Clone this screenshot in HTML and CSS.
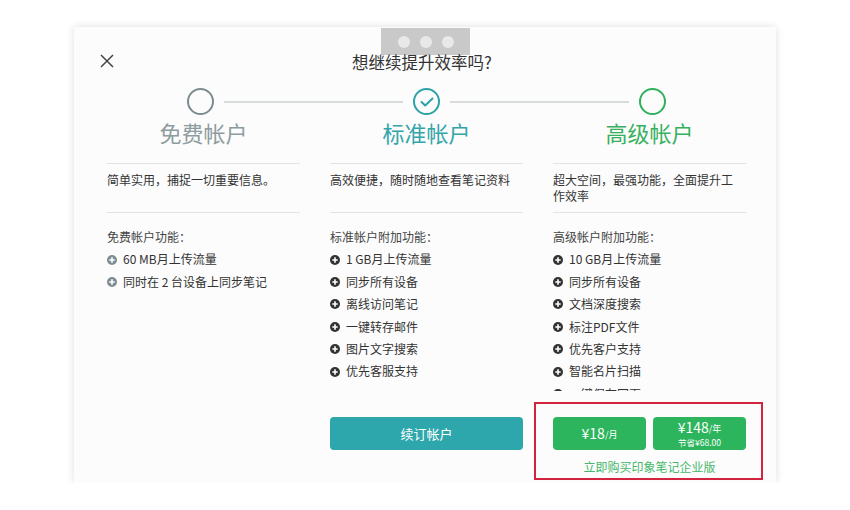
FILE: index.html
```html
<!DOCTYPE html>
<html lang="zh">
<head>
<meta charset="utf-8">
<title>想继续提升效率吗?</title>
<link rel="stylesheet" href="styles.css">
</head>
<body>
<div class="card">
  <div class="handle"><span></span><span></span><span></span></div>
  <svg class="close" width="14" height="14" viewBox="0 0 14 14"><path d="M1 1L13 13M13 1L1 13" stroke="#444" stroke-width="1.5" fill="none"/></svg>
  <div class="title">想继续提升效率吗?</div>

  <div class="steps">
    <span class="circle gray"></span>
    <span class="line"></span>
    <span class="circle teal"><svg width="14" height="10" viewBox="0 0 14 10"><path d="M1.5 5L5.2 8.5L12.5 1.5" fill="none" stroke="currentColor" stroke-width="2" stroke-linecap="round" stroke-linejoin="round"/></svg></span>
    <span class="line"></span>
    <span class="circle green"></span>
  </div>

  <div class="labels">
    <div class="label gray">免费帐户</div>
    <div class="label teal">标准帐户</div>
    <div class="label green">高级帐户</div>
  </div>

  <div class="cols">
    <div class="col gray">
      <div class="desc">简单实用，捕捉一切重要信息。</div>
      <div class="features">
        <div class="fhead">免费帐户功能：</div>
        <div class="item"><svg class="plus" viewBox="0 0 10 10"><circle cx="5" cy="5" r="5" fill="currentColor"/><path d="M5 2.3V7.7M2.3 5H7.7" stroke="#fff" stroke-width="1.6"/></svg><span>60 MB月上传流量</span></div>
        <div class="item"><svg class="plus" viewBox="0 0 10 10"><circle cx="5" cy="5" r="5" fill="currentColor"/><path d="M5 2.3V7.7M2.3 5H7.7" stroke="#fff" stroke-width="1.6"/></svg><span>同时在 2 台设备上同步笔记</span></div>
      </div>
    </div>

    <div class="col teal">
      <div class="desc">高效便捷，随时随地查看笔记资料</div>
      <div class="features">
        <div class="fhead">标准帐户附加功能：</div>
        <div class="item"><svg class="plus" viewBox="0 0 10 10"><circle cx="5" cy="5" r="5" fill="currentColor"/><path d="M5 2.3V7.7M2.3 5H7.7" stroke="#fff" stroke-width="1.6"/></svg><span>1 GB月上传流量</span></div>
        <div class="item"><svg class="plus" viewBox="0 0 10 10"><circle cx="5" cy="5" r="5" fill="currentColor"/><path d="M5 2.3V7.7M2.3 5H7.7" stroke="#fff" stroke-width="1.6"/></svg><span>同步所有设备</span></div>
        <div class="item"><svg class="plus" viewBox="0 0 10 10"><circle cx="5" cy="5" r="5" fill="currentColor"/><path d="M5 2.3V7.7M2.3 5H7.7" stroke="#fff" stroke-width="1.6"/></svg><span>离线访问笔记</span></div>
        <div class="item"><svg class="plus" viewBox="0 0 10 10"><circle cx="5" cy="5" r="5" fill="currentColor"/><path d="M5 2.3V7.7M2.3 5H7.7" stroke="#fff" stroke-width="1.6"/></svg><span>一键转存邮件</span></div>
        <div class="item"><svg class="plus" viewBox="0 0 10 10"><circle cx="5" cy="5" r="5" fill="currentColor"/><path d="M5 2.3V7.7M2.3 5H7.7" stroke="#fff" stroke-width="1.6"/></svg><span>图片文字搜索</span></div>
        <div class="item"><svg class="plus" viewBox="0 0 10 10"><circle cx="5" cy="5" r="5" fill="currentColor"/><path d="M5 2.3V7.7M2.3 5H7.7" stroke="#fff" stroke-width="1.6"/></svg><span>优先客服支持</span></div>
      </div>
      <button class="btn btn-teal">续订帐户</button>
    </div>

    <div class="col green">
      <div class="desc">超大空间，最强功能，全面提升工作效率</div>
      <div class="features">
        <div class="fhead">高级帐户附加功能：</div>
        <div class="item"><svg class="plus" viewBox="0 0 10 10"><circle cx="5" cy="5" r="5" fill="currentColor"/><path d="M5 2.3V7.7M2.3 5H7.7" stroke="#fff" stroke-width="1.6"/></svg><span>10 GB月上传流量</span></div>
        <div class="item"><svg class="plus" viewBox="0 0 10 10"><circle cx="5" cy="5" r="5" fill="currentColor"/><path d="M5 2.3V7.7M2.3 5H7.7" stroke="#fff" stroke-width="1.6"/></svg><span>同步所有设备</span></div>
        <div class="item"><svg class="plus" viewBox="0 0 10 10"><circle cx="5" cy="5" r="5" fill="currentColor"/><path d="M5 2.3V7.7M2.3 5H7.7" stroke="#fff" stroke-width="1.6"/></svg><span>文档深度搜索</span></div>
        <div class="item"><svg class="plus" viewBox="0 0 10 10"><circle cx="5" cy="5" r="5" fill="currentColor"/><path d="M5 2.3V7.7M2.3 5H7.7" stroke="#fff" stroke-width="1.6"/></svg><span>标注PDF文件</span></div>
        <div class="item"><svg class="plus" viewBox="0 0 10 10"><circle cx="5" cy="5" r="5" fill="currentColor"/><path d="M5 2.3V7.7M2.3 5H7.7" stroke="#fff" stroke-width="1.6"/></svg><span>优先客户支持</span></div>
        <div class="item"><svg class="plus" viewBox="0 0 10 10"><circle cx="5" cy="5" r="5" fill="currentColor"/><path d="M5 2.3V7.7M2.3 5H7.7" stroke="#fff" stroke-width="1.6"/></svg><span>智能名片扫描</span></div>
        <div class="item"><svg class="plus" viewBox="0 0 10 10"><circle cx="5" cy="5" r="5" fill="currentColor"/><path d="M5 2.3V7.7M2.3 5H7.7" stroke="#fff" stroke-width="1.6"/></svg><span>一键保存网页</span></div>
      </div>
      <div class="buy">
        <button class="btn btn-green"><span class="price">¥18</span><span class="unit">/月</span></button>
        <button class="btn btn-green two">
          <span class="row1"><span class="price">¥148</span><span class="unit">/年</span></span>
          <span class="save">节省¥68.00</span>
        </button>
      </div>
      <a class="biz" href="#">立即购买印象笔记企业版</a>
    </div>
  </div>

  <div class="highlight"></div>
</div>
</body>
</html>
```

FILE: styles.css
```css
html, body {
  margin: 0;
  padding: 0;
  background: #ffffff;
}

body {
  font-family: "Noto Sans CJK SC", "Noto Sans", sans-serif;
  color: #333;
}

.card {
  position: relative;
  box-sizing: border-box;
  margin: 27px 0 0 74px;
  width: 702px;
  height: 456px;
  padding: 25px 31px 0 33px;
  background: #fcfcfc;
  box-shadow: 0 0 8px rgba(0, 0, 0, 0.13);
}

.handle {
  position: absolute;
  top: 1px;
  left: 307px;
  width: 89px;
  height: 27px;
  background: #c9c9c9;
  display: flex;
  align-items: center;
  justify-content: center;
  gap: 10px;
}

.handle span {
  width: 12px;
  height: 12px;
  border-radius: 50%;
  background: #e8e8e8;
}

.close {
  position: absolute;
  left: 26px;
  top: 27px;
}

.title {
  position: relative;
  text-align: center;
  font-size: 16.5px;
  line-height: 20px;
  height: 20px;
  color: #333;
  margin-right: 8px;
}

.steps {
  display: flex;
  align-items: center;
  margin: 16px 79px 0 80px;
  height: 27px;
}

.circle {
  box-sizing: border-box;
  width: 27px;
  height: 27px;
  border-radius: 50%;
  border: 2px solid currentColor;
  display: flex;
  align-items: center;
  justify-content: center;
  flex: none;
}

.line {
  flex: 1;
  height: 2px;
  background: #d9dcdc;
  margin: 0 10px;
}

.gray { color: #7b8b8e; }
.teal { color: #2ca2a6; }
.green { color: #2fb05a; }

.labels {
  display: grid;
  grid-template-columns: 193px 193px 193px;
  column-gap: 30px;
  margin-top: 4px;
}

.label {
  text-align: center;
  font-size: 22px;
  line-height: 26px;
  height: 26px;
}

.label.gray { color: #8d9c9e; }
.label.teal { color: #33a5a9; }
.label.green { color: #37b160; }

.cols {
  display: grid;
  grid-template-columns: 193px 193px 193px;
  column-gap: 30px;
  margin-top: 18px;
}

.col {
  display: flex;
  flex-direction: column;
}

.desc {
  box-sizing: border-box;
  height: 50px;
  border-top: 1px solid #e3e3e3;
  border-bottom: 1px solid #e3e3e3;
  padding: 8px 8px 0 0;
  font-size: 12px;
  line-height: 16px;
  color: #333;
}

.features {
  height: 178px;
  overflow: hidden;
  padding-top: 13px;
  box-sizing: border-box;
}

.fhead {
  font-size: 12px;
  line-height: 22.4px;
  color: #444;
}

.item {
  display: flex;
  align-items: center;
  gap: 6px;
  font-size: 12px;
  line-height: 22.4px;
  color: #333;
}

.col.gray .plus { color: #7f8d95; }

.plus {
  width: 10px;
  height: 10px;
  flex: none;
}

.btn {
  border: none;
  margin: 0;
  padding: 0;
  font-family: inherit;
  color: #fff;
  border-radius: 4px;
  height: 33px;
  cursor: pointer;
}

.btn-teal {
  margin-top: 26px;
  width: 193px;
  background: #2ea7ac;
  font-size: 13px;
}

.buy {
  margin-top: 26px;
  display: flex;
  gap: 7px;
}

.btn-green {
  flex: 1;
  background: #2cb55c;
  display: flex;
  align-items: center;
  justify-content: center;
}

.btn-green .price {
  font-size: 14px;
  line-height: 15px;
}

.btn-green .unit {
  font-size: 9px;
  line-height: 15px;
  margin-top: 2px;
}

.btn-green.two {
  flex-direction: column;
}

.btn-green .row1 {
  display: flex;
  align-items: center;
  height: 15px;
}

.btn-green .save {
  display: block;
  font-size: 8.5px;
  line-height: 11px;
  height: 11px;
  margin-top: 2px;
}

.biz {
  margin-top: 9px;
  display: block;
  text-align: center;
  font-size: 12px;
  line-height: 16px;
  color: #44b86a;
  text-decoration: none;
}

.highlight {
  position: absolute;
  left: 460px;
  top: 375px;
  width: 229px;
  height: 78px;
  box-sizing: border-box;
  border: 2px solid #d3243f;
  pointer-events: none;
}
```
